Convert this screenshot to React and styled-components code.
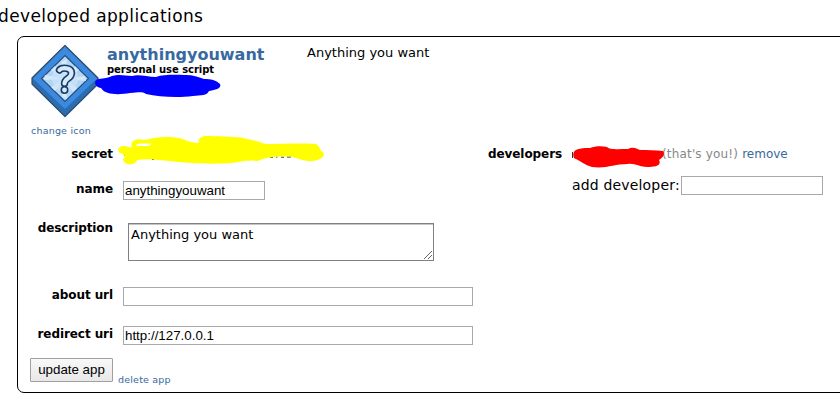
import React from "react";
import styled, { createGlobalStyle } from "styled-components";

const Global = createGlobalStyle`
  * { box-sizing: border-box; }
  body {
    margin: 0;
    background: #fff;
    color: #000;
    font-family: "DejaVu Sans", Verdana, sans-serif;
    overflow: hidden;
  }
`;

const Page = styled.main`
  width: 840px;
  height: 400px;
  overflow: hidden;
`;

const Title = styled.h1`
  margin: 0 0 0 -2px;
  height: 36px;
  padding-top: 4px;
  font-size: 17px;
  line-height: 24px;
  font-weight: 400;
  letter-spacing: 0.38px;
  white-space: nowrap;
`;

const Card = styled.section`
  width: 850px;
  height: 357px;
  margin-left: 17px;
  border: 1px solid #000;
  border-radius: 7px;
`;

const Header = styled.header`
  display: flex;
  height: 100px;
`;

const IconColumn = styled.div`
  width: 89px;
  padding: 7px 0 0 13px;
`;

const AppIcon = styled.svg`
  display: block;
  width: 68px;
  height: 74px;
`;

const Link = styled.a`
  color: #3769a0;
  text-decoration: none;
  white-space: nowrap;
  font-size: ${(p) => p.$size || 12}px;
  letter-spacing: ${(p) => p.$spacing || 0}px;
  line-height: 14px;
`;

const IconLink = styled(Link)`
  display: block;
  margin-top: 6px;
`;

const AppInfo = styled.div`
  position: relative;
  width: 200px;
  padding-top: 9px;
`;

const AppName = styled.h2`
  margin: 0;
  color: #3769a0;
  font-size: 16px;
  line-height: 18px;
`;

const AppKind = styled.div`
  font-size: 10px;
  font-weight: 700;
  line-height: 12px;
  letter-spacing: -0.05px;
  white-space: nowrap;
`;

const Summary = styled.p`
  margin: 7px 0 0;
  font-size: 13px;
  line-height: 18px;
`;

const Columns = styled.div`
  display: flex;
`;

const Form = styled.form`
  width: 470px;
`;

const Row = styled.div`
  display: flex;
  align-items: flex-start;
  height: ${(p) => p.$height}px;
  padding-top: ${(p) => p.$top || 10}px;
`;

const Label = styled.label`
  width: ${(p) => p.$width || 95}px;
  margin-right: 10px;
  text-align: right;
  font-size: 12px;
  font-weight: 700;
  line-height: 16px;
  letter-spacing: -0.08px;
  white-space: nowrap;
`;

const Input = styled.input`
  width: ${(p) => p.$width}px;
  height: 19px;
  padding: 0 1px 1px;
  border: 1px solid #a9a9a9;
  border-radius: 0;
  outline: none;
  background: #fff;
  color: #000;
  font: 13.33px "Liberation Sans", Arial, sans-serif;
`;

const AreaFrame = styled.div`
  position: relative;
  margin: 3px 0 0 5px;
`;

const Area = styled.textarea`
  display: block;
  width: 306px;
  height: 38px;
  padding: 3px 2px;
  border: 1px solid #808080;
  border-radius: 0;
  outline: none;
  resize: none;
  overflow: hidden;
  box-shadow: inset 0 1px #c4c4c4;
  color: #000;
  font: 13px/16px "DejaVu Sans", Verdana, sans-serif;
`;

const Grip = styled.svg`
  position: absolute;
  right: 2px;
  bottom: 2px;
  width: 8px;
  height: 8px;
`;

const Actions = styled.div`
  display: flex;
  align-items: flex-start;
  padding: 4px 0 0 12px;
`;

const Button = styled.button`
  width: 83px;
  height: 24px;
  margin-right: 5px;
  padding: 0 0 1px;
  border: 1px solid #a0a0a0;
  border-radius: 1px;
  background: linear-gradient(#f8f8f8, #e8e8e8);
  color: #000;
  font: 13.33px "Liberation Sans", Arial, sans-serif;
`;

const DeleteLink = styled(Link)`
  margin-top: 15px;
`;

const Developers = styled.div`
  flex: 1;
`;

const Redacted = styled.span`
  position: relative;
  width: ${(p) => p.$width}px;
  height: 16px;
`;

const Scribble = styled.svg`
  position: absolute;
  left: ${(p) => p.$x}px;
  top: ${(p) => p.$y}px;
  width: ${(p) => p.$w}px;
  height: ${(p) => p.$h}px;
`;

const Muted = styled.span`
  color: #888;
  font-size: 12px;
  line-height: 16px;
  letter-spacing: 0.17px;
  margin-right: 4px;
  white-space: nowrap;
`;

const AddLabel = styled.span`
  width: 109px;
  font-size: 14px;
  line-height: 18px;
  letter-spacing: 0.17px;
  white-space: nowrap;
`;

const RemoveLink = styled(Link)`
  line-height: 16px;
`;

function QuestionIcon() {
  const mark = "M28.500 26 C31 23 40.500 23.500 40.500 29 C40.500 35 33.500 34 33.500 39.500";
  return (
    <AppIcon viewBox="0 0 68 74">
      <path d="M34 1.5 L67 34 V40 L34 72.5 L1 40 V34 Z" fill="#2c6cb0" stroke="#2b4c6b" strokeWidth="1.2" strokeLinejoin="round" />
      <path d="M34 2.5 L66 34.5 L34 65 L2 34.5 Z" fill="#3b8ae0" />
      <path d="M34 11.5 L57.5 34.5 L34 57.5 L10.5 34.5 Z" fill="#b3d5f4" stroke="#204b78" strokeWidth="1.1" />
      <path
        d="M34 35 L30 18 L36 15 Z M34 35 L44 22 L48 26 Z M34 35 L54 32 L55 37 Z M34 35 L46 44 L42 48 Z M34 35 L36 55 L31 53 Z M34 35 L24 47 L20 43 Z M34 35 L13 36 L14 31 Z M34 35 L20 26 L24 22 Z"
        fill="#d3e8fa"
      />
      <circle cx="34" cy="34.5" r="13" fill="#cce4f9" opacity="0.7" />
      <path d={mark} fill="none" stroke="#173b62" strokeWidth="7.4" strokeLinecap="round" strokeLinejoin="round" />
      <circle cx="33.5" cy="46" r="4" fill="#173b62" />
      <path d={mark} fill="none" stroke="#d6eafb" strokeWidth="4.2" strokeLinecap="round" strokeLinejoin="round" />
      <circle cx="33.5" cy="46" r="2.4" fill="#d6eafb" />
    </AppIcon>
  );
}

export default function App() {
  return (
    <Page>
      <Global />
      <Title>developed applications</Title>
      <Card>
        <Header>
          <IconColumn>
            <QuestionIcon />
            <IconLink $size={9.5} $spacing={0.2}>change icon</IconLink>
          </IconColumn>
          <AppInfo>
            <AppName>anythingyouwant</AppName>
            <AppKind>personal use script</AppKind>
            <Scribble $x={-12} $y={37} $w={126} $h={24} viewBox="95 74 126 24">
              <path
                d="M99 79 C104 78 108 78 112 76 C119 74 126 76 132 76 C139 74 147 77 156 77 C164 74 178 75 186 75 C193 75 198 77 204 79 C211 79 216 80 220 84 C222 89 214 90 209 91 C207 96 201 95 193 96 C178 98 159 97 146 94 C141 91 138 93 130 93 C119 95 105 95 101 88 C94 87 93 80 99 79 Z"
                fill="#00f"
              />
            </Scribble>
          </AppInfo>
          <Summary>Anything you want</Summary>
        </Header>
        <Columns>
          <Form onSubmit={(e) => e.preventDefault()}>
            <Row $height={34} $top={9}>
              <Label as="span">secret</Label>
              <Redacted $width={200}>
                <Scribble $x={-6} $y={-11} $w={208} $h={34} viewBox="117 134 208 34">
                  <path d="M124.500 154 v1 M152 158.500 h2 M270 156.200 h3 M276 156 h1.500 M281 156.200 h3 M287 156 h4" stroke="#333" strokeWidth="1" fill="none" />
                  <path
                    fillRule="evenodd"
                    d="M121 145.500 C125 144 128 147 132 146 C130 141 134 138 140 138.500 C147 139 151 138 154 137 C166 135 181 136 187 140 C192 141 195 142 199 142 C197 138 202 135 206 135 C218 135 232 136 241 136.500 C251 139 259 140 265 143 C283 143 301 142 316 143 C321 146 319 149 323 151 C326 156 320 159 315 159.500 C307 162 298 157 290 155.500 C278 155 264 156 258 160 C249 159 243 160 236 161.500 C214 164 186 162 170 160 C159 159 147 157 137 159 C136 165 123 165 123 158 C127 155 123 153 120 152 C117 150 118 146 121 145.500 Z M136 145 H149 L152 142.500 H141 Q136 142.500 136 145 Z"
                    fill="#ff0"
                  />
                </Scribble>
              </Redacted>
            </Row>
            <Row $height={36}>
              <Label>name</Label>
              <Input $width={142} defaultValue="anythingyouwant" />
            </Row>
            <Row $height={70} $top={13}>
              <Label>description</Label>
              <AreaFrame>
                <Area defaultValue="Anything you want" />
                <Grip viewBox="0 0 8 8">
                  <path d="M0 8 L8 0 M4 8 L8 4" stroke="#555" strokeWidth="0.9" />
                </Grip>
              </AreaFrame>
            </Row>
            <Row $height={39}>
              <Label>about url</Label>
              <Input $width={350} />
            </Row>
            <Row $height={38}>
              <Label>redirect uri</Label>
              <Input $width={350} defaultValue="http://127.0.0.1" />
            </Row>
            <Actions>
              <Button>update app</Button>
              <DeleteLink $size={9.5} $spacing={0.2}>delete app</DeleteLink>
            </Actions>
          </Form>
          <Developers>
            <Row $height={34} $top={9}>
              <Label as="span" $width={74}>developers</Label>
              <Redacted $width={90}>
                <Scribble $x={-1} $y={-1} $w={94} $h={23} viewBox="571 144 94 23">
                  <path d="M572.500 151 v6" stroke="#333" strokeWidth="1" />
                  <path
                    d="M573.500 152 C575 147 584 147 590 147 C595 145 602 145 607 146 C609 149 620 148 628 148 C633 145 638 148 640 149 C647 149 655 149 663 150 C666 154 661 158 659 159 C662 165 655 166 647 166 C640 166 634 162 628 163 C614 163 606 168 592 166 C585 164 580 160 576 158 C573 157 573 154 573.500 152 Z"
                    fill="#f00"
                  />
                </Scribble>
              </Redacted>
              <Muted>(that's you!)</Muted>
              <RemoveLink>remove</RemoveLink>
            </Row>
            <Row $height={36} $top={5}>
              <Label as="span" $width={74} />
              <AddLabel>add developer:</AddLabel>
              <Input $width={142} />
            </Row>
          </Developers>
        </Columns>
      </Card>
    </Page>
  );
}
